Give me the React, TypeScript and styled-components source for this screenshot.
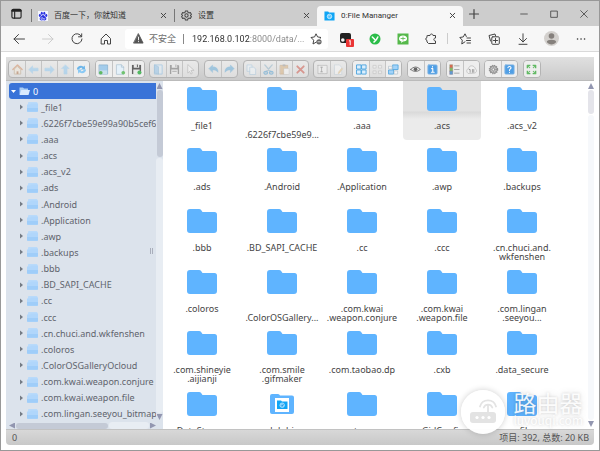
import React from "react";
import styled, { createGlobalStyle, css } from "styled-components";

const uiFont = `Roboto, "Noto Sans CJK SC", sans-serif`;
const fileFont = `"Noto Sans", "Noto Sans CJK SC", sans-serif`;

const GlobalStyle = createGlobalStyle`
  *, *::before, *::after { box-sizing: border-box; }
  body { margin: 0; overflow: hidden; font-family: ${uiFont}; }
  button { padding: 0; border: 0; background: none; font: inherit; color: inherit; }
  ul { margin: 0; padding: 0; list-style: none; }
  svg { display: block; flex: none; }
`;

const BrowserWindow = styled.div`
  position: relative;
  display: flex;
  flex-direction: column;
  height: 100vh;
  min-height: 240px;
  border: 1px solid #989898;
  background: #fff;
  overflow: hidden;
`;

/* ---------- Browser chrome ---------- */

const TabStrip = styled.header`
  display: flex;
  flex: none;
  height: 25px;
  background: #cdcdcd;
  color: #333;
  font-size: 8px;
  line-height: 14px;
`;

const TabMenuButton = styled.button`
  display: grid;
  place-items: center;
  width: 30px;
`;

const Tab = styled.div<{ $active?: boolean }>`
  display: flex;
  align-items: center;
  flex: 0 1 143px;
  min-width: 0;
  gap: 6px;
  padding: 4px 5px 0 7px;
  ${(p) =>
    p.$active
      ? css`
          flex-basis: 146px;
          margin-top: 5px;
          padding-top: 0;
          padding-bottom: 1px;
          border-radius: 4px 4px 0 0;
          background: #f7f7f7;
        `
      : css`
          background: linear-gradient(#777, #777) 0 8px / 1px 13px no-repeat;
        `}
`;

const TabTitle = styled.button`
  flex: 1;
  min-width: 0;
  overflow: hidden;
  text-align: left;
  white-space: nowrap;
`;

const ChromeButton = styled.button<{ $width?: number }>`
  display: grid;
  place-items: center;
  flex: none;
  width: ${(p) => p.$width ?? 12}px;
`;

const WindowControls = styled.div`
  display: flex;
  margin-left: auto;
`;

const AddressBar = styled.nav`
  display: flex;
  flex: none;
  align-items: center;
  gap: 5px;
  height: 26px;
  padding: 0 4px 0 3px;
  border-bottom: 1px solid #d9d9d9;
  background: #f7f7f7;
`;

const NavButtons = styled.div`
  display: flex;
  flex: none;
`;

const UrlBox = styled.label`
  display: flex;
  flex: 1;
  min-width: 0;
  align-items: center;
  gap: 5px;
  height: 20px;
  padding: 0 6px 0 8px;
  border-radius: 3px;
  background: #fff;
  color: #707070;
  font-size: 9px;
  line-height: 14px;
  white-space: nowrap;
`;

const UrlDivider = styled.span`
  width: 1px;
  height: 10px;
  margin: 0 3px 0 2px;
  background: #888;
`;

const UrlInput = styled.input`
  flex: 1;
  min-width: 0;
  padding: 0;
  border: 0;
  outline: 0;
  background: linear-gradient(90deg, #2b2b2b 58px, #858585 58px);
  background-clip: text;
  color: transparent;
  font: 9px/14px ${uiFont};
`;

const Extensions = styled.div`
  display: flex;
  flex: none;
  align-items: center;
`;

const ExtensionDivider = styled.span`
  width: 1px;
  height: 11px;
  margin: 0 2px;
  background: #ccc;
`;

/* ---------- File manager ---------- */

const Manager = styled.main`
  display: flex;
  flex: 1;
  flex-direction: column;
  min-height: 0;
  margin: 5px;
  color: #555;
  font: 9px/9px ${fileFont};
`;

const Toolbar = styled.div`
  flex: none;
  height: 24px;
  padding: 3px 2px;
  border-bottom: 1px solid #bbb;
  background: linear-gradient(#e0e0e0, #cacaca);
`;

const ToolbarGroups = styled.div`
  display: flex;
  justify-content: space-between;
  max-width: 533px;
`;

const ToolGroup = styled.div`
  display: flex;
  height: 18px;
  border: 1px solid #b4b4b4;
  border-radius: 4px;
  background: linear-gradient(#e9e9e9, #dedede);
  overflow: hidden;
`;

const ToolButton = styled.button<{ $off?: boolean }>`
  display: grid;
  place-items: center;
  width: 16px;
  background: ${(p) => (p.$off ? "transparent" : "#eeeeee")};

  & + & { border-left: 1px solid #c4c4c4; }
  svg { opacity: ${(p) => (p.$off ? 0.45 : 0.9)}; }
`;

const Workspace = styled.div`
  display: flex;
  flex: 1;
  min-height: 0;
`;

const Sidebar = styled.aside`
  position: relative;
  display: grid;
  grid-template: minmax(0, 1fr) 7px / minmax(0, 1fr) 7px;
  flex: none;
  width: 157px;
  padding-left: 3px;
  background: #dce3ec;
`;

const ResizeHandle = styled.span`
  position: absolute;
  top: 48%;
  right: 10px;
  width: 3px;
  height: 6px;
  border: 1px solid #a9aebb;
  border-width: 0 1px;
`;

const Tree = styled.ul`
  display: grid;
  grid-auto-rows: minmax(16px, 1fr);
  padding-top: 2px;
  overflow: hidden;
`;

const TreeItem = styled.li`
  display: grid;
`;

const TreeButton = styled.button<{ $root?: boolean }>`
  display: flex;
  align-items: center;
  gap: 3px;
  min-width: 0;
  padding-left: ${(p) => (p.$root ? 2 : 10)}px;
  border-radius: 3px 0 0 3px;
  background: ${(p) => (p.$root ? "#3973d8" : "transparent")};
  color: ${(p) => (p.$root ? "#fff" : "#5f646c")};
  white-space: nowrap;
`;

const Scroll = styled.div<{ $row?: boolean }>`
  display: flex;
  flex-direction: ${(p) => (p.$row ? "row" : "column")};
  align-items: center;
  justify-content: space-between;
  gap: 1px;
  padding: ${(p) => (p.$row ? "0" : "2px 0")};
`;

const ScrollTrack = styled.div`
  flex: 1;
  align-self: stretch;
  border-radius: 3px;
  background: rgba(240, 243, 248, 0.6);
`;

const ScrollThumb = styled.div<{ $row?: boolean; $size: string; $light?: boolean }>`
  width: ${(p) => (p.$row ? p.$size : "6px")};
  height: ${(p) => (p.$row ? "6px" : p.$size)};
  border-radius: 3px;
  background: ${(p) => (p.$light ? "#e4e4ea" : "#c4cad6")};
`;

const Arrow = styled.button<{ $dir: "up" | "down" | "left" | "right" }>`
  width: 6px;
  height: 6px;
  background: #9296b0;
  clip-path: ${(p) =>
    ({
      up: "polygon(50% 0, 100% 100%, 0 100%)",
      down: "polygon(0 0, 100% 0, 50% 100%)",
      left: "polygon(100% 0, 100% 100%, 0 50%)",
      right: "polygon(0 0, 100% 50%, 0 100%)",
    })[p.$dir]};
`;

const Files = styled.ul`
  display: grid;
  grid-template-columns: repeat(auto-fill, 78px);
  grid-auto-rows: 59px;
  gap: 2px;
  flex: 1;
  min-width: 0;
  overflow: hidden;
`;

const FileCell = styled.button<{ $hover?: boolean }>`
  display: flex;
  flex-direction: column;
  align-items: center;
  gap: 10px;
  width: 100%;
  height: 59px;
  padding-top: 6px;
  border-radius: 0 0 4px 4px;
  background: ${(p) =>
    p.$hover
      ? "linear-gradient(#e2e2e2 30px, #d9d9d9 31px, #ebebeb 38px)"
      : "transparent"};
  color: #444;
  text-align: center;
`;

const FileName = styled.span<{ $lower?: boolean }>`
  padding-top: ${(p) => (p.$lower ? 9 : 0)}px;
  white-space: pre;
`;

const StatusBar = styled.footer`
  display: flex;
  flex: none;
  align-items: center;
  justify-content: space-between;
  height: 16px;
  padding: 0 5px 0 6px;
  border-top: 1px solid #c2c2c2;
  border-radius: 0 0 4px 4px;
  background: linear-gradient(#d8d8d8, #c8c8c8);
`;

const Watermark = styled.div`
  position: absolute;
  right: 16px;
  bottom: 16px;
  display: flex;
  align-items: center;
  gap: 8px;
  color: rgba(255, 255, 255, 0.92);
  font-family: "Noto Sans CJK SC", sans-serif;
  text-shadow: 0 0 3px rgba(0, 0, 0, 0.16), 0 0 8px rgba(0, 0, 0, 0.12);
  pointer-events: none;
`;

const WatermarkBadge = styled.span`
  display: grid;
  place-items: center;
  width: 44px;
  height: 44px;
  border-radius: 50%;
  background: rgba(255, 255, 255, 0.96);
  box-shadow: 0 0 6px rgba(0, 0, 0, 0.2);
`;

const WatermarkText = styled.span`
  display: grid;
  padding-bottom: 8px;
  font-size: 12px;
  line-height: 12px;
`;

const WatermarkName = styled.strong`
  font-size: 23px;
  font-weight: 400;
  line-height: 24px;
`;

/* ---------- Icons ---------- */

type GlyphProps = { size?: number; color?: string; width?: number; children: React.ReactNode };

const Glyph = ({ size = 12, color = "#444", width = 1, children }: GlyphProps) => (
  <svg width={size} height={size} viewBox="0 0 12 12" fill="none" stroke={color} strokeWidth={width} strokeLinecap="round" strokeLinejoin="round" aria-hidden="true">
    {children}
  </svg>
);

const CloseIcon = ({ size = 9 }: { size?: number }) => (
  <Glyph size={size} width={1.3}><path d="M3 3l6 6M9 3l-6 6" /></Glyph>
);

const gearPath =
  "M4.8 1h2.4l.4 1.6 1 .6 1.6-.5 1.2 2.1L10.2 6l1.2 1.2-1.2 2.1-1.6-.5-1 .6-.4 1.6H4.8l-.4-1.6-1-.6-1.6.5L.6 7.2 1.8 6 .6 4.8l1.2-2.1 1.6.5 1-.6z";

const BaiduIcon = () => (
  <svg width="10" height="10" viewBox="0 0 20 20" aria-hidden="true">
    <rect width="20" height="20" fill="#f4f6ff" />
    <g fill="#2932e1">
      <ellipse cx="3.8" cy="9" rx="2.1" ry="2.8" />
      <ellipse cx="7.6" cy="4.4" rx="2.1" ry="3" />
      <ellipse cx="12.6" cy="4.4" rx="2.1" ry="3" />
      <ellipse cx="16.5" cy="9" rx="2.1" ry="2.8" />
      <path d="M10 8c2.5 0 3.2 3 5.3 4.7 2.7 2.2 1.2 6.3-1.8 6.3-1.6 0-2-.4-3.5-.4S8.1 19 6.5 19c-3 0-4.5-4.1-1.8-6.3C6.8 11 7.500 8 10 8z" />
    </g>
    <path d="M8.500 12v5H7a1.200 1.200 0 010-3h1.500M11 14v2.500h2.500V14" fill="none" stroke="#fff" strokeWidth="1" />
  </svg>
);

const SiteIcon = ({ size = 11 }: { size?: number }) => (
  <svg width={size} height={size} viewBox="0 0 12 12" aria-hidden="true">
    <path d="M.5 1.500h4l1 1.300h6v8.700H.5z" fill="#10a5f5" />
    <circle cx="6" cy="7" r="2.500" fill="#8bd6ff" stroke="#dff4ff" strokeWidth=".7" />
    <path d="M4.900 7.200l.8.8 1.500-1.900" fill="none" stroke="#10a5f5" strokeWidth=".8" />
  </svg>
);

const TreeFolder = ({ open }: { open?: boolean }) => (
  <svg width="11" height="10" viewBox="0 0 11 10" aria-hidden="true">
    {open ? (
      <>
        <path d="M.5 8.500V1.500h3.500l1 1h4V4" fill="#a9cdf5" />
        <path d="M.5 9l1.800-5H11L9.500 9z" fill="#d8eaff" />
      </>
    ) : (
      <>
        <path d="M1 9V1q0-1 1-1h7.500q1 0 1 1V9z" fill="#b9dafa" />
        <path d="M0 2.500h3l1-1h7v7.500q0 .8-.8.8H.8q-.8 0-.8-.8z" fill="#b0d6fb" />
        <path d="M0 6h11v3q0 .8-.8.8H.8Q0 9.800 0 9z" fill="#9fcdf9" />
      </>
    )}
  </svg>
);

const Caret = ({ open }: { open?: boolean }) => (
  <svg width="5" height="6" viewBox="0 0 5 6" aria-hidden="true">
    {open ? <path d="M0 2h5L2.500 5z" fill="#fff" /> : <path d="M1 .5L4 3 1 5.500z" fill="#747b85" />}
  </svg>
);

const BigFolder = ({ site }: { site?: boolean }) => (
  <svg width="30" height="24" viewBox="0 0 30 24" aria-hidden="true">
    {site ? (
      <>
        <path d="M3 4q0-2 2-2h6q1.500 0 2 1.500h12q2 0 2 2V20q0 2-2 2H5q-2 0-2-2z" fill="#5fb4ff" />
        <path d="M8 6h14v14H8z" fill="#fff" />
        <path d="M10 8.500h4l1 1h5.500V17H10z" fill="#10a5f5" />
        <circle cx="15.200" cy="13.200" r="2.300" fill="#7bd0ff" stroke="#c9edff" strokeWidth=".6" />
        <path d="M14 13.300l1 1 1.500-2" fill="none" stroke="#0879d0" strokeWidth=".7" />
      </>
    ) : (
      <path d="M0 3Q0 0 3 0h9q1.500 0 2.300 1.200L15.500 3H27.500Q30 3 30 5.500V21q0 3-3 3H3q-3 0-3-3z" fill="#5fb4ff" />
    )}
  </svg>
);

const toolArt: Record<string, React.ReactNode> = {
  home: <><path d="M1 6l5-5 5 5" stroke="#d27a45" strokeWidth="1.500" /><path d="M2.500 6v5h7V6L6 2.800z" fill="#f2e6d4" stroke="#b89a76" /><path d="M5 8h2v3H5z" fill="#a55e32" stroke="none" /></>,
  back: <path d="M1 6l4-4v2.500h6v3H5V10z" fill="#82c4f3" stroke="#82c4f3" strokeWidth=".6" />,
  forward: <path d="M11 6L7 2v2.500H1v3h6V10z" fill="#82c4f3" stroke="#82c4f3" strokeWidth=".6" />,
  up: <path d="M6 1l4 4H7.700v6H4.300V5H2z" fill="#82c4f3" stroke="#82c4f3" strokeWidth=".6" />,
  reload: <><path d="M1 6c0-4 5-5 7-3l1.500-1.500L10 6H5.500L7 4.500C5 3.500 4 4.500 3.500 6z" fill="#5eafe8" stroke="none" /><path d="M11 6c0 4-5 5-7 3l-1.500 1.500L2 6h4.500L5 7.500C7 8.500 8 7.500 8.500 6z" fill="#7ec5f5" stroke="none" /></>,
  mkdir: <><path d="M1.500 1h9v10h-9z" fill="#9bc8ea" stroke="#74a2c3" strokeWidth=".7" /><path d="M2 7h8v4H2z" fill="#c4ddec" stroke="none" /><circle cx="3" cy="9.500" r="2" fill="#51b354" stroke="none" /></>,
  newfile: <><path d="M2 .8h5l2.500 2.500v8H2z" fill="#e4f1fb" stroke="#a0b9cb" strokeWidth=".7" /><path d="M7 1v2.500h2.500" stroke="#a0b9cb" strokeWidth=".7" /><circle cx="9" cy="9.500" r="2" fill="#62bd62" stroke="none" /></>,
  upload: <><path d="M1 1h10v10H1z" fill="#555" stroke="none" /><path d="M3 1h6v3H3zM2.500 6h7v5h-7z" fill="#e8e8e8" stroke="none" /><path d="M7 1v2" stroke="#444" /><circle cx="9.200" cy="9.200" r="2.200" fill="#42b353" stroke="none" /></>,
  open: <><path d="M2 1h8v10H2z" fill="#deedf8" stroke="#71afe0" /><path d="M2 1l4 2v8l-4-1z" fill="#83bdeb" stroke="#5b9ccb" strokeWidth=".7" /></>,
  save: <><path d="M1 1h9l1 1v9H1z" fill="#555" stroke="none" /><path d="M3 1h6v3H3zM2.500 6h7v5h-7z" fill="#eee" stroke="none" /><path d="M7.500 1v2M4 8h4" stroke="#666" /></>,
  pointer: <path d="M3 1v9l2-2 1.500 3 1.500-1-1.500-3H9.500z" fill="#fafafa" stroke="#888" strokeWidth=".7" />,
  undo: <path d="M1 5l4-4v2c4 0 6 2 6 6-2-2-3-2.500-6-2.500V9z" fill="#4c9fd5" stroke="#4c9fd5" strokeWidth=".5" />,
  redo: <path d="M11 5L7 1v2C3 3 1 5 1 9c2-2 3-2.500 6-2.500V9z" fill="#4c9fd5" stroke="#4c9fd5" strokeWidth=".5" />,
  copy: <><path d="M1.500 1h5v7h-5z" fill="#eef6fc" stroke="#8cb9da" strokeWidth=".8" /><path d="M4.500 3.500h4l2 2v6h-6z" fill="#f1f8fd" stroke="#8cb9da" strokeWidth=".8" /></>,
  cut: <><path d="M2 1l7 8M10 1L3 9" stroke="#86acc3" strokeWidth="1.500" /><ellipse cx="3" cy="9.500" rx="2" ry="1.500" stroke="#3e96ce" strokeWidth="1.300" /><ellipse cx="9" cy="9.500" rx="2" ry="1.500" stroke="#3e96ce" strokeWidth="1.300" /></>,
  paste: <><path d="M1.500 1.500h8v9.500h-8z" fill="#d6a76c" stroke="#b07e47" strokeWidth=".7" /><path d="M4 .5h3v2H4z" fill="#888" stroke="none" /><path d="M5.500 5h5.500v6.500H5.500z" fill="#fafafa" stroke="#aaa" strokeWidth=".5" /></>,
  remove: <path d="M2.500 2.500l7 7M9.500 2.500l-7 7" stroke="#c93a2a" strokeWidth="2" />,
  rename: <><path d="M1 1.500h10v9H1z" fill="#f4f4f4" stroke="#888" strokeWidth=".8" strokeDasharray="2 .8" /><path d="M4 3.500h2M4 8.500h2M5 3.500v5" stroke="#555" strokeWidth=".8" /></>,
  edit: <><path d="M2 1h5l2.500 2.500v8H2z" fill="#fafafa" stroke="#aac0d2" strokeWidth=".7" /><path d="M10.500 5.500L7 10l-1.500.5.5-1.800 3.300-4z" fill="#eec57a" stroke="#c5a57e" strokeWidth=".4" /></>,
  grid: <path d="M1 1h4.500v4.500H1zM6.500 1H11v4.500H6.500zM1 6.500h4.500V11H1zM6.500 6.500H11V11H6.500z" fill="#d9eefe" stroke="#3b9ddd" />,
  ungrid: <path d="M1.500 1.500h3v3h-3zM7.500 1.500h3v3h-3zM1.500 7.500h3v3h-3zM7.500 7.500h3v3h-3z" fill="#f3f3f3" stroke="#a9a9a9" strokeWidth=".8" />,
  invert: <><path d="M5.500 1H11v5H5.500zM1 6.500h5V11H1z" fill="#9ad0fa" stroke="#3b9ddd" strokeWidth=".9" /><path d="M1 2.500h3.500v3H1zM7 7.500h3.500V11H7z" fill="#f5f5f5" stroke="#a7b8c5" strokeWidth=".7" /></>,
  view: <><path d="M.7 6Q6 .3 11.300 6 6 10.500.7 6z" fill="#eee" stroke="#555" strokeWidth=".9" /><circle cx="6" cy="5.800" r="2" fill="#555" stroke="none" /></>,
  info: <><rect x="1" y="1" width="10" height="10" rx="1" fill="#3f96e4" stroke="#72ade0" /><path d="M5 5h1.300v3.800M4.800 9h3M6 2.800v.4" stroke="#fff" strokeWidth="1.200" /></>,
  sort: <><path d="M1 .8h3v3.500H1z" fill="#d85a3e" stroke="#886" strokeWidth=".5" /><path d="M1 4.300h3v3.500H1z" fill="#73b554" stroke="#886" strokeWidth=".5" /><path d="M1 7.800h3v3.500H1z" fill="#4e94ce" stroke="#668" strokeWidth=".5" /><path d="M6 2h5M6 6h5M6 10h5" stroke="#888" strokeWidth=".8" /></>,
  network: <><path d="M2 10c-3-3 0-5 1-5 0-4 6-4 7 0 3 2 1 5-1 5z" fill="#f2f2f2" stroke="#aaa" strokeWidth=".7" /><path d="M3.500 6h1v3M7 6v3M8.500 6v3" stroke="#666" strokeWidth=".7" /></>,
  gear: <><circle cx="6" cy="6" r="4.600" stroke="#888" strokeWidth="1.200" strokeDasharray="1.400 1" strokeLinecap="butt" /><circle cx="6" cy="6" r="4" fill="#b8b8b8" stroke="#777" strokeWidth=".8" /><path d="M6 2.500v7M2.500 6h7M3.500 3.500l5 5M8.500 3.500l-5 5" stroke="#888" strokeWidth=".6" /><circle cx="6" cy="6" r="1.300" fill="#eee" stroke="#777" strokeWidth=".5" /></>,
  help: <><rect x="1" y="1" width="10" height="10" rx="1" fill="#3f96e4" stroke="#72ade0" /><path d="M4.300 4c.3-1.800 3.500-1.600 3.300.2C7.500 5.500 6 5.300 6 7M6 9v.1" stroke="#fff" strokeWidth="1.200" /></>,
  full: <><path d="M1.500 4v-2.500h2.500M8 1.500h2.500v2.500M1.500 8v2.500h2.500M8 10.500h2.500v-2.500" stroke="#4db350" strokeWidth="1.500" strokeLinecap="square" /><path d="M2 2l2 2M10 2l-2 2M2 10l2-2M10 10l-2-2" stroke="#62b864" strokeWidth="1.200" /></>,
};

/* ---------- Data ---------- */

type Tool = [art: keyof typeof toolArt, label: string, enabled?: boolean];

const toolGroups: Tool[][] = [
  [["home", "Home"], ["back", "Back"], ["forward", "Forward"], ["up", "Up"], ["reload", "Reload", true]],
  [["mkdir", "New folder", true], ["newfile", "New file", true], ["upload", "Upload", true]],
  [["open", "Open"], ["save", "Download"], ["pointer", "Get info"]],
  [["undo", "Undo"], ["redo", "Redo"]],
  [["copy", "Copy"], ["cut", "Cut"], ["paste", "Paste"], ["remove", "Delete"]],
  [["rename", "Rename"], ["edit", "Edit"]],
  [["grid", "Select all", true], ["ungrid", "Select none"], ["invert", "Invert selection", true]],
  [["view", "Preview", true], ["info", "Properties", true]],
  [["sort", "Sort", true], ["network", "Connect", true]],
  [["gear", "Preferences", true], ["help", "Help", true]],
  [["full", "Full screen", true]],
];

const treeNames = [
  "_file1", ".6226f7cbe59e99a90b5cef6", ".aaa", ".acs", ".acs_v2", ".ads", ".Android",
  ".Application", ".awp", ".backups", ".bbb", ".BD_SAPI_CACHE", ".cc", ".ccc",
  ".cn.chuci.and.wkfenshen", ".coloros", ".ColorOSGalleryOcloud", ".com.kwai.weapon.conjure",
  ".com.kwai.weapon.file", ".com.lingan.seeyou_bitmap",
];

type FileEntry = { name: string; lower?: boolean; hover?: boolean; site?: boolean };

const files: FileEntry[] = [
  { name: "_file1" }, { name: ".6226f7cbe59e9...", lower: true }, { name: ".aaa" }, { name: ".acs", hover: true }, { name: ".acs_v2" },
  { name: ".ads" }, { name: ".Android" }, { name: ".Application" }, { name: ".awp" }, { name: ".backups" },
  { name: ".bbb" }, { name: ".BD_SAPI_CACHE" }, { name: ".cc" }, { name: ".ccc" }, { name: ".cn.chuci.and.\nwkfenshen" },
  { name: ".coloros" }, { name: ".ColorOSGallery...", lower: true }, { name: ".com.kwai\n.weapon.conjure" }, { name: ".com.kwai\n.weapon.file" }, { name: ".com.lingan\n.seeyou..." },
  { name: ".com.shineyie\n.aijianji" }, { name: ".com.smile\n.gifmaker" }, { name: ".com.taobao.dp" }, { name: ".cxb" }, { name: ".data_secure" },
  { name: ".DataStorage" }, { name: ".dolphin", site: true }, { name: ".estrongs" }, { name: ".GidConfig" }, { name: ".gfile" },
];

/* ---------- App ---------- */

export default function App() {
  return (
    <>
      <GlobalStyle />
      <BrowserWindow>
        <TabStrip>
          <TabMenuButton aria-label="Tab actions">
            <Glyph size={11} color="#222" width={1.2}><rect x="1" y="1.500" width="10" height="9.500" rx="1.500" /><path d="M1.500 3h9" strokeWidth="2.400" /><path d="M4 4v7" /></Glyph>
          </TabMenuButton>
          <Tab>
            <BaiduIcon />
            <TabTitle>百度一下，你就知道</TabTitle>
            <ChromeButton aria-label="Close tab"><CloseIcon /></ChromeButton>
          </Tab>
          <Tab>
            <Glyph size={11} width={1.1}><path d={gearPath} /><circle cx="6" cy="6" r="1.800" /></Glyph>
            <TabTitle>设置</TabTitle>
            <ChromeButton aria-label="Close tab"><CloseIcon /></ChromeButton>
          </Tab>
          <Tab $active>
            <SiteIcon />
            <TabTitle>0:File Mananger</TabTitle>
            <ChromeButton aria-label="Close tab"><CloseIcon /></ChromeButton>
          </Tab>
          <ChromeButton $width={22} aria-label="New tab">
            <Glyph width={1.2}><path d="M6 1.500v9M1.500 6h9" /></Glyph>
          </ChromeButton>
          <WindowControls>
            <ChromeButton $width={30} aria-label="Minimize"><Glyph size={10}><path d="M2 6h8" /></Glyph></ChromeButton>
            <ChromeButton $width={30} aria-label="Maximize"><Glyph size={10}><path d="M2.500 2.500h7.500v7.500H2.500z" /></Glyph></ChromeButton>
            <ChromeButton $width={30} aria-label="Close"><Glyph size={10}><path d="M2 2l8 8M10 2l-8 8" /></Glyph></ChromeButton>
          </WindowControls>
        </TabStrip>

        <AddressBar>
          <NavButtons>
            <ChromeButton $width={29} aria-label="Back"><Glyph><path d="M11.500 6H1M5.500 1.500L1 6l4.500 4.500" /></Glyph></ChromeButton>
            <ChromeButton $width={29} aria-label="Forward"><Glyph color="#ccc"><path d="M.5 6H11M6.500 1.500L11 6l-4.500 4.500" /></Glyph></ChromeButton>
            <ChromeButton $width={29} aria-label="Refresh"><Glyph><path d="M10.500 3.500A5 5 0 1011 6M10.700.8v3H7.500" /></Glyph></ChromeButton>
            <ChromeButton $width={29} aria-label="Home"><Glyph><path d="M1.500 5.500L6 1l4.500 4.500V11H7.500V7.500h-3V11h-3z" /></Glyph></ChromeButton>
          </NavButtons>
          <UrlBox>
            <Glyph size={11} color="#555"><path d="M6 1l5 10H1z" fill="#555" /><path d="M6 4.500v3M6 9.300v.2" stroke="#fff" /></Glyph>
            不安全
            <UrlDivider />
            <UrlInput aria-label="Address" defaultValue="192.168.0.102:8000/data/..." />
            <Glyph><path d="M6.500 9L3 11l.7-3.800L1 4.500l3.600-.6L6 .8l1.600 3.100 3.400.6-1 1" /><circle cx="9" cy="8.800" r="2.600" fill="#666" stroke="none" /><path d="M7.900 8.800h2.200" stroke="#fff" strokeWidth=".8" /></Glyph>
          </UrlBox>
          <Extensions>
            <ChromeButton $width={28} aria-label="Extension, 1 notification">
              <svg width="18" height="16" viewBox="0 0 18 16" aria-hidden="true">
                <rect x="2" y="2" width="11" height="10" rx="2" fill="#222" />
                <circle cx="4.800" cy="9" r="1.800" fill="#f7f7f7" />
                <rect x="8" y="8" width="8" height="8" rx="1" fill="#ea3535" />
                <path d="M11 10.200l1.200-.8v4.800" fill="none" stroke="#fff" />
              </svg>
            </ChromeButton>
            <ChromeButton $width={28} aria-label="Video extension">
              <Glyph><circle cx="6" cy="6" r="5.500" fill="#2bbd49" stroke="none" /><path d="M3.300 4L5.800 6.500M8.800 4Q7.500 7.500 5 9" stroke="#fff" strokeWidth="1.500" /></Glyph>
            </ChromeButton>
            <ChromeButton $width={28} aria-label="Chat extension">
              <Glyph><path d="M.5.500h11v11H.5z" fill="#55b84a" stroke="none" /><path d="M6 2.500c-5 0-5 5.500-1.500 6L4 10l2-1.400c5.500 0 5.500-6 0-6.100z" fill="#fff" stroke="none" /><path d="M4 5.500h4M6 4v3" stroke="#55b84a" strokeWidth=".8" /></Glyph>
            </ChromeButton>
            <ChromeButton $width={28} aria-label="Extensions">
              <Glyph><path d="M3 2.500h2c0-2 3-2 3 0h2.500V5C8.300 5 8.300 8 10.500 8v2.500H3.500L2 9V7.500C.3 7 .3 5 2 4.500V3z" /></Glyph>
            </ChromeButton>
            <ExtensionDivider />
            <ChromeButton $width={29} aria-label="Favorites"><Glyph><path d="M6 8.800L2.800 11l.5-3.800L.8 4.500l3.500-.6L6 .8l1.300 2.700M8 5h3.500M7.500 7.500h4M8 10h3.500" /></Glyph></ChromeButton>
            <ChromeButton $width={29} aria-label="Collections"><Glyph><path d="M2.500 8L1 2.500 7 1l.6 2" /><rect x="3.800" y="3.800" width="7.500" height="7.500" rx="1" /><path d="M7.500 5.500v4M5.500 7.500h4" /></Glyph></ChromeButton>
            <ChromeButton $width={29} aria-label="Downloads"><Glyph><path d="M6 .8v8M2.500 5.500L6 9l3.500-3.500M2 11.300h8" /></Glyph></ChromeButton>
            <ChromeButton $width={29} aria-label="Profile">
              <svg width="15" height="15" viewBox="0 0 15 15" aria-hidden="true"><circle cx="7.500" cy="7.500" r="7.500" fill="#d3d0cd" /><circle cx="7.500" cy="5" r="2.800" fill="#85807c" /><path d="M2.800 11c0-3 9.400-3 9.400 0-2 3.300-7.400 3.300-9.400 0z" fill="#85807c" /></svg>
            </ChromeButton>
            <ChromeButton $width={29} aria-label="More"><Glyph color="#333" width={1.5}><path d="M2.500 6h.1M6 6h.1M9.500 6h.1" /></Glyph></ChromeButton>
          </Extensions>
        </AddressBar>

        <Manager>
          <Toolbar role="toolbar" aria-label="File tools">
            <ToolbarGroups>
              {toolGroups.map((group) => (
                <ToolGroup key={group[0][0]}>
                  {group.map(([art, label, enabled]) => (
                    <ToolButton key={art} $off={!enabled} disabled={!enabled} aria-label={label}>
                      <Glyph size={11}>{toolArt[art]}</Glyph>
                    </ToolButton>
                  ))}
                </ToolGroup>
              ))}
            </ToolbarGroups>
          </Toolbar>

          <Workspace>
            <Sidebar>
              <Tree>
                <TreeItem><TreeButton $root><Caret open /><TreeFolder open />0</TreeButton></TreeItem>
                {treeNames.map((name) => (
                  <TreeItem key={name}><TreeButton><Caret /><TreeFolder />{name}</TreeButton></TreeItem>
                ))}
              </Tree>
              <Scroll>
                <Arrow $dir="up" aria-label="Scroll up" />
                <ScrollThumb $size="67px" />
                <ScrollTrack />
                <Arrow $dir="down" aria-label="Scroll down" />
              </Scroll>
              <Scroll $row>
                <Arrow $dir="left" aria-label="Scroll left" />
                <ScrollThumb $row $size="92px" />
                <ScrollTrack />
                <Arrow $dir="right" aria-label="Scroll right" />
              </Scroll>
              <ResizeHandle />
            </Sidebar>
            <Files>
              {files.map((file) => (
                <li key={file.name}>
                  <FileCell $hover={file.hover}>
                    <BigFolder site={file.site} />
                    <FileName $lower={file.lower}>{file.name}</FileName>
                  </FileCell>
                </li>
              ))}
            </Files>
            <Scroll>
              <Arrow $dir="up" aria-label="Scroll up" />
              <ScrollThumb $size="24px" $light />
              <ScrollTrack />
              <Arrow $dir="down" aria-label="Scroll down" />
            </Scroll>
          </Workspace>

          <StatusBar>
            <span>0</span>
            <span>项目: 392, 总数: 20 KB</span>
          </StatusBar>
        </Manager>

        <Watermark>
          <WatermarkBadge>
            <svg width="28" height="28" viewBox="0 0 28 28" fill="none" aria-hidden="true">
              <rect x="1" y="14" width="26" height="11" rx="3" fill="#e3e3e3" />
              <circle cx="8" cy="19.500" r="1.600" fill="#fff" /><circle cx="14" cy="19.500" r="1.600" fill="#fff" /><circle cx="20" cy="19.500" r="1.600" fill="#fff" />
              <path d="M19 14V8M11 8.500a8.300 8.300 0 0116 0M14.800 9.500a4.600 4.600 0 018.500 0" stroke="#e3e3e3" strokeWidth="1.800" strokeLinecap="round" />
            </svg>
          </WatermarkBadge>
          <WatermarkText>
            <WatermarkName>路由器</WatermarkName>
            luvouqi.com
          </WatermarkText>
        </Watermark>
      </BrowserWindow>
    </>
  );
}
